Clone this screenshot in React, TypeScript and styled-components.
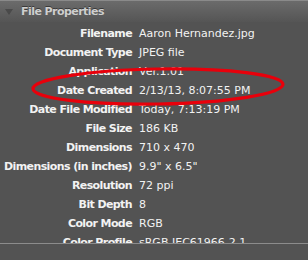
import React from 'react';
import styled, { createGlobalStyle } from 'styled-components';

interface Row {
  label: string;
  value: string;
}

const rows: Row[] = [
  { label: 'Filename', value: 'Aaron Hernandez.jpg' },
  { label: 'Document Type', value: 'JPEG file' },
  { label: 'Application', value: 'Ver.1.01' },
  { label: 'Date Created', value: '2/13/13, 8:07:55 PM' },
  { label: 'Date File Modified', value: 'Today, 7:13:19 PM' },
  { label: 'File Size', value: '186 KB' },
  { label: 'Dimensions', value: '710 x 470' },
  { label: 'Dimensions (in inches)', value: '9.9" x 6.5"' },
  { label: 'Resolution', value: '72 ppi' },
  { label: 'Bit Depth', value: '8' },
  { label: 'Color Mode', value: 'RGB' },
  { label: 'Color Profile', value: 'sRGB IEC61966-2.1' },
];

const App: React.FC = () => (
  <>
    <GlobalStyle />
    <Panel>
      <Header>
        <Disclosure />
        <HeaderTitle>File Properties</HeaderTitle>
      </Header>
      <Body>
        <Grid>
          {rows.map((r) => (
            <React.Fragment key={r.label}>
              <Label>{r.label}</Label>
              <Value>{r.value}</Value>
            </React.Fragment>
          ))}
        </Grid>
        <Circle viewBox="0 0 308 260" width="308" height="260">
          <ellipse
            cx="158"
            cy="86.5"
            rx="125"
            ry="17.5"
            fill="none"
            stroke="#e8000b"
            strokeWidth="3.2"
            transform="rotate(-1 158 86.5)"
          />
        </Circle>
      </Body>
      <Footer />
    </Panel>
  </>
);

// Styles
const GlobalStyle = createGlobalStyle`
  html, body {
    margin: 0;
    padding: 0;
    background: #535353;
  }
`;

const Panel = styled.div`
  position: relative;
  width: 308px;
  height: 260px;
  overflow: hidden;
  background: #535353;
  font-family: 'DejaVu Sans', sans-serif;
`;

const Header = styled.div`
  display: flex;
  align-items: center;
  height: 22px;
  box-sizing: border-box;
  border-top: 1px solid #8a8a8a;
  background: linear-gradient(#6b6b6b, #555555);
  padding-left: 5px;
`;

const Disclosure = styled.div`
  width: 0;
  height: 0;
  border-left: 4px solid transparent;
  border-right: 4px solid transparent;
  border-top: 6px solid #4a4a4a;
  margin-right: 8px;
`;

const HeaderTitle = styled.span`
  color: #cfcfcf;
  font-weight: bold;
  font-size: 11px;
  letter-spacing: -0.55px;
  text-shadow: 0 -1px 0 #3a3a3a;
`;

const Body = styled.div`
  position: relative;
  height: 221px;
  border-bottom: 1px solid #8c8c8c;
  overflow: hidden;
`;

const Grid = styled.div`
  display: grid;
  grid-template-columns: 132px 1fr;
  column-gap: 7px;
  grid-auto-rows: 19px;
  padding-top: 2px;
`;

const Label = styled.div`
  text-align: right;
  color: #f2f2f2;
  font-weight: bold;
  font-size: 11px;
  letter-spacing: -0.6px;
  line-height: 19px;
  white-space: nowrap;
`;

const Value = styled.div`
  color: #f2f2f2;
  font-size: 11px;
  line-height: 19px;
  white-space: nowrap;
`;

const Circle = styled.svg`
  position: absolute;
  left: 0;
  top: -22px;
  pointer-events: none;
`;

const Footer = styled.div`
  height: 17px;
  background: #535353;
`;

export default App;
